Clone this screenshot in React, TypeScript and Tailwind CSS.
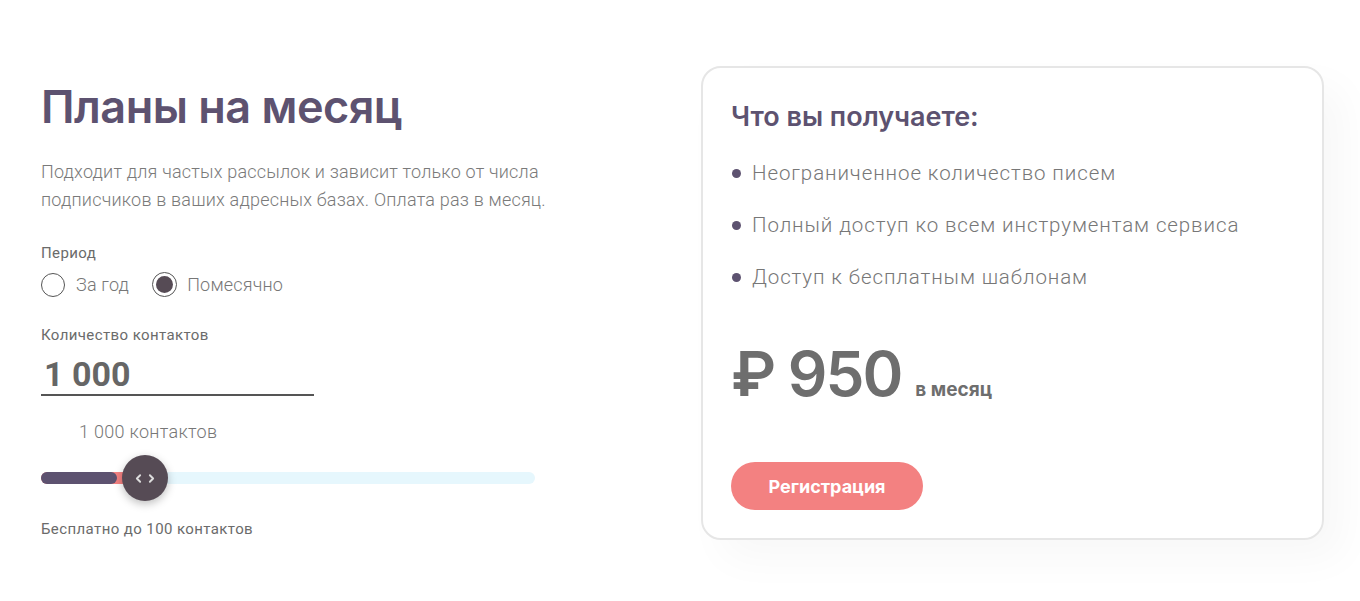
import { ChevronLeft, ChevronRight } from 'lucide-react';

const features = [
  'Неограниченное количество писем',
  'Полный доступ ко всем инструментам сервиса',
  'Доступ к бесплатным шаблонам',
];

export default function App() {
  return (
    <div className="min-h-screen bg-white font-['Roboto',sans-serif]">
      <div className="flex pt-[66px] pl-[41px]">
        {/* Left: plan settings */}
        <div className="w-[660px] pt-[14px]">
          <h1 className="font-['Inter',sans-serif] text-[45px] leading-[54px] font-semibold tracking-[-0.5px] text-[#5d5270]">
            Планы на месяц
          </h1>
          <p className="mt-[24px] w-[540px] text-[18px] leading-[28px] font-light tracking-[0.2px] text-[#7a7a7a]">
            Подходит для частых рассылок и зависит только от числа подписчиков в ваших адресных базах. Оплата раз в месяц.
          </p>

          <div className="mt-[29px] text-[15px] leading-[20px] tracking-[0.4px] text-[#6b6b6b]">Период</div>
          <div className="mt-[8px] flex items-center gap-[23px]">
            <label className="flex items-center gap-[11px]">
              <span className="w-[24px] h-[24px] rounded-full border border-[#555]" />
              <span className="text-[18px] font-light tracking-[0.2px] text-[#777]">За год</span>
            </label>
            <label className="flex items-center gap-[10px]">
              <span className="w-[25px] h-[25px] rounded-full border border-[#555] flex items-center justify-center">
                <span className="w-[17px] h-[17px] rounded-full bg-[#564b55]" />
              </span>
              <span className="text-[18px] font-light tracking-[0.2px] text-[#777]">Помесячно</span>
            </label>
          </div>

          <div className="mt-[27px] text-[15px] leading-[20px] tracking-[0.4px] text-[#6b6b6b]">Количество контактов</div>
          <div className="mt-[10px] w-[273px] border-b-2 border-[#555] pl-[3px] pb-[1px] text-[34px] leading-[38px] font-bold text-[#666]">
            1 000
          </div>

          <div className="mt-[22px] pl-[38px] text-[18px] font-light tracking-[0.3px] text-[#777]">1 000 контактов</div>

          <div className="relative mt-[27px] h-[12px] w-[494px] rounded-full bg-[#e6f7fd]">
            <div className="absolute left-0 top-0 h-[12px] w-[96px] rounded-full bg-[#f38181]" />
            <div className="absolute left-0 top-0 h-[12px] w-[76px] rounded-full bg-[#5d5270]" />
            <div className="absolute left-[81px] top-[-17px] flex h-[46px] w-[46px] items-center justify-center rounded-full bg-[#564b55] shadow-[0_3px_8px_rgba(0,0,0,0.25)]">
              <ChevronLeft className="h-[13px] w-[13px] text-[#ddd]" strokeWidth={3.5} />
              <ChevronRight className="h-[13px] w-[13px] text-[#ddd]" strokeWidth={3.5} />
            </div>
          </div>

          <div className="mt-[35px] text-[15px] leading-[20px] tracking-[0.4px] text-[#6b6b6b]">Бесплатно до 100 контактов</div>
        </div>

        {/* Right: what you get */}
        <div className="w-[623px] h-[474px] rounded-[20px] border-2 border-[#e6e6e6] px-[28px] pt-[33px] shadow-[20px_20px_40px_rgba(0,0,0,0.03)]">
          <h2 className="font-['Inter',sans-serif] text-[27px] leading-[32px] font-semibold text-[#5d5270]">
            Что вы получаете:
          </h2>
          <ul className="mt-[26px] flex flex-col gap-[24px]">
            {features.map((f) => (
              <li key={f} className="flex items-center gap-[11px] text-[20.5px] leading-[28px] font-light tracking-[0.9px] text-[#777]">
                <span className="ml-[1px] w-[9px] h-[9px] rounded-full bg-[#5d5270]" />
                {f}
              </li>
            ))}
          </ul>

          <div className="mt-[48px] flex items-baseline gap-[14px] text-[#6e6e6e]">
            <span className="font-['Inter',sans-serif] text-[62px] leading-[70px] font-semibold tracking-[-2px]">₽ 950</span>
            <span className="font-['Inter',sans-serif] text-[19px] font-bold">в месяц</span>
          </div>

          <button className="mt-[53px] h-[48px] w-[192px] rounded-full bg-[#f38181] text-[18px] font-bold text-white font-['Inter',sans-serif]">
            Регистрация
          </button>
        </div>
      </div>
    </div>
  );
}
